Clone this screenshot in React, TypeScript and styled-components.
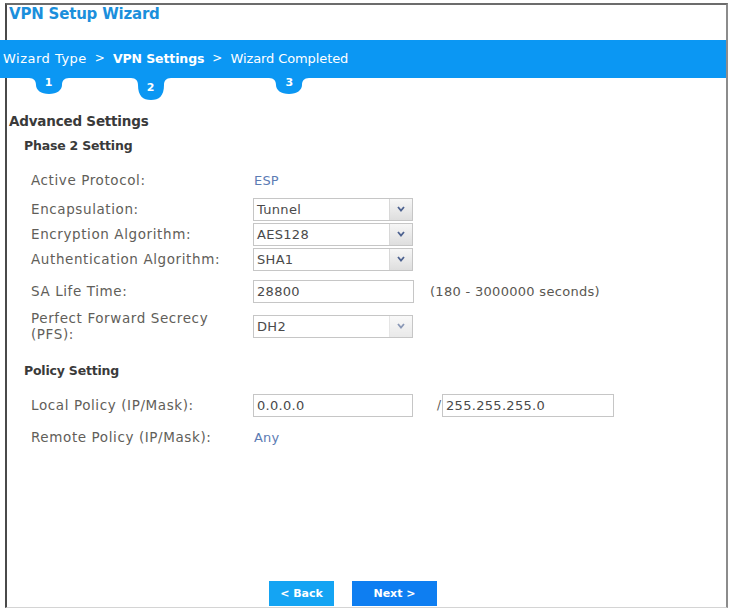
import React from "react";
import styled, { createGlobalStyle } from "styled-components";

const Global = createGlobalStyle`
  html, body { margin: 0; padding: 0; background: #ffffff; }
  body { font-family: "DejaVu Sans", "Liberation Sans", sans-serif; }
  #root { width: 729px; height: 609px; overflow: hidden; }
`;

const Frame = styled.div`
  margin: 3px 0 0 5px;
  width: 723px;
  height: 605px;
  box-sizing: border-box;
  border-top: 2px solid #6c6c6c;
  border-left: 2px solid #4a4a4a;
  border-right: 2px solid #8c8c8c;
  border-bottom: 1px solid #d4d4d4;
  display: flex;
  flex-direction: column;
`;

const Title = styled.h1`
  margin: 0;
  height: 35px;
  padding: 0 0 0 2px;
  font-size: 15px;
  line-height: 18px;
  font-weight: bold;
  color: #1b8fdc;
  letter-spacing: -0.2px;
`;

const Band = styled.nav`
  margin-left: -7px;
  width: 726px;
  height: 38px;
  box-sizing: border-box;
  padding: 0 0 0 3px;
  background: #0b97f3;
  display: flex;
  align-items: stretch;
  gap: 8px;
  position: relative;
  z-index: 1;
`;

const Step = styled.div<{ $active?: boolean; $spacing: number }>`
  position: relative;
  display: flex;
  align-items: center;
  padding-bottom: 2px;
  font-size: ${(p) => (p.$active ? 12.5 : 13)}px;
  color: #ffffff;
  font-weight: ${(p) => (p.$active ? "bold" : "normal")};
  letter-spacing: ${(p) => p.$spacing}px;
`;

const Chevron = styled.span`
  display: flex;
  align-items: center;
  padding-bottom: 2px;
  font-size: 12px;
  color: #ffffff;
`;

const Tab = styled.span<{ $active?: boolean; $shift: number }>`
  position: absolute;
  top: 100%;
  left: 50%;
  width: 40px;
  height: ${(p) => (p.$active ? 22 : 16)}px;
  margin-left: ${(p) => p.$shift - 20}px;
  display: flex;
  justify-content: center;
  svg {
    position: absolute;
    inset: 0;
  }
`;

const TabNumber = styled.span<{ $active?: boolean }>`
  position: relative;
  margin-top: ${(p) => (p.$active ? 4 : -1)}px;
  font-size: 11px;
  line-height: 12px;
  font-weight: bold;
  color: #ffffff;
`;

const Body = styled.div`
  display: flex;
  flex-direction: column;
  padding: 34px 0 0 2px;
  color: #5e5b56;
`;

const Heading = styled.h2`
  margin: 0;
  font-size: 13.5px;
  line-height: 18px;
  font-weight: bold;
  color: #3a3a3a;
  letter-spacing: -0.2px;
`;

const SubHeading = styled.h3<{ $top: number }>`
  margin: ${(p) => p.$top}px 0 0 15px;
  font-size: 12.5px;
  line-height: 18px;
  font-weight: bold;
  color: #3a3a3a;
  letter-spacing: -0.2px;
`;

const Row = styled.div<{ $top: number; $height?: number }>`
  display: grid;
  grid-template-columns: 222px auto;
  align-items: center;
  margin: ${(p) => p.$top}px 0 0 22px;
  min-height: ${(p) => p.$height ?? 24}px;
`;

const Label = styled.div`
  font-size: 13.5px;
  line-height: 16px;
  color: #615e59;
  letter-spacing: 0.6px;
`;

const Fields = styled.div`
  display: flex;
  align-items: center;
`;

const Value = styled.span`
  padding-left: 1px;
  font-size: 13px;
  color: #5c7cb4;
  letter-spacing: 0.2px;
`;

const Box = styled.div<{ $width: number }>`
  width: ${(p) => p.$width}px;
  height: 23px;
  box-sizing: border-box;
  border: 1px solid #c6c6c6;
  background: #ffffff;
  display: flex;
  align-items: stretch;
`;

const BoxText = styled.span`
  flex: 1;
  display: flex;
  align-items: center;
  padding-left: 3px;
  font-size: 13px;
  letter-spacing: 0.3px;
  color: #4a4a4a;
`;

const Arrow = styled.span<{ $dim?: boolean }>`
  width: 22px;
  border-left: 1px solid #d8d8d8;
  background: linear-gradient(#f6f6f6, #dedede);
  display: flex;
  align-items: center;
  justify-content: center;
  opacity: ${(p) => (p.$dim ? 0.65 : 1)};
`;

const Hint = styled.span`
  margin-left: 16px;
  font-size: 13px;
  letter-spacing: 0.3px;
  color: #5a5752;
`;

const Slash = styled.span`
  margin: 0 1px 0 24px;
  font-size: 12px;
  color: #5a5752;
`;

const Footer = styled.div`
  margin-top: auto;
  padding: 0 0 1px 262px;
  display: flex;
  gap: 18px;
`;

const Button = styled.button<{ $primary?: boolean }>`
  height: 25px;
  width: ${(p) => (p.$primary ? 85 : 65)}px;
  border: none;
  padding: 0;
  font-family: inherit;
  font-size: 11px;
  font-weight: bold;
  color: #ffffff;
  background: ${(p) => (p.$primary ? "#0e7ef1" : "#14a4f3")};
`;

/* Rounded tab hanging under the step band, flaring into it at the top. */
const TabShape = ({ active }: { active?: boolean }) => {
  const h = active ? 22 : 16;
  return (
    <svg width={40} height={h} viewBox={`0 0 40 ${h}`}>
      <path
        d={`M0 0 H40 C35 0 33 3 33 7 C33 ${h - 4} 28 ${h} 20 ${h} C12 ${h} 7 ${h - 4} 7 7 C7 3 5 0 0 0 Z`}
        fill="#0b97f3"
      />
    </svg>
  );
};

const SelectArrow = () => (
  <svg width="8" height="6" viewBox="0 0 8 6">
    <polyline points="1,1 4,4.5 7,1" fill="none" stroke="#4d6290" strokeWidth="1.8" />
  </svg>
);

const Select = ({ value, dim }: { value: string; dim?: boolean }) => (
  <Box $width={160}>
    <BoxText>{value}</BoxText>
    <Arrow $dim={dim}>
      <SelectArrow />
    </Arrow>
  </Box>
);

const steps = [
  { label: "Wizard Type", n: 1, shift: 4, spacing: 0.5 },
  { label: "VPN Settings", n: 2, active: true, shift: -8, spacing: -0.1 },
  { label: "Wizard Completed", n: 3, shift: 0, spacing: -0.1 },
];

export default function App() {
  return (
    <>
      <Global />
      <Frame>
        <Title>VPN Setup Wizard</Title>
        <Band>
          {steps.map((s, i) => (
            <React.Fragment key={s.n}>
              {i > 0 && <Chevron>&gt;</Chevron>}
              <Step $active={s.active} $spacing={s.spacing}>
                {s.label}
                <Tab $active={s.active} $shift={s.shift}>
                  <TabShape active={s.active} />
                  <TabNumber $active={s.active}>{s.n}</TabNumber>
                </Tab>
              </Step>
            </React.Fragment>
          ))}
        </Band>
        <Body>
          <Heading>Advanced Settings</Heading>
          <SubHeading $top={7}>Phase 2 Setting</SubHeading>
          <Row $top={13}>
            <Label>Active Protocol:</Label>
            <Value>ESP</Value>
          </Row>
          <Row $top={5}>
            <Label>Encapsulation:</Label>
            <Fields>
              <Select value="Tunnel" />
            </Fields>
          </Row>
          <Row $top={1}>
            <Label>Encryption Algorithm:</Label>
            <Fields>
              <Select value="AES128" />
            </Fields>
          </Row>
          <Row $top={1}>
            <Label>Authentication Algorithm:</Label>
            <Fields>
              <Select value="SHA1" />
            </Fields>
          </Row>
          <Row $top={8}>
            <Label>SA Life Time:</Label>
            <Fields>
              <Box $width={161}>
                <BoxText>28800</BoxText>
              </Box>
              <Hint>(180 - 3000000 seconds)</Hint>
            </Fields>
          </Row>
          <Row $top={7} $height={32}>
            <Label>
              Perfect Forward Secrecy
              <br />
              (PFS):
            </Label>
            <Fields>
              <Select value="DH2" dim />
            </Fields>
          </Row>
          <SubHeading $top={20}>Policy Setting</SubHeading>
          <Row $top={13}>
            <Label>Local Policy (IP/Mask):</Label>
            <Fields>
              <Box $width={160}>
                <BoxText>0.0.0.0</BoxText>
              </Box>
              <Slash>/</Slash>
              <Box $width={172}>
                <BoxText>255.255.255.0</BoxText>
              </Box>
            </Fields>
          </Row>
          <Row $top={8}>
            <Label>Remote Policy (IP/Mask):</Label>
            <Value>Any</Value>
          </Row>
        </Body>
        <Footer>
          <Button>&lt; Back</Button>
          <Button $primary>Next &gt;</Button>
        </Footer>
      </Frame>
    </>
  );
}
